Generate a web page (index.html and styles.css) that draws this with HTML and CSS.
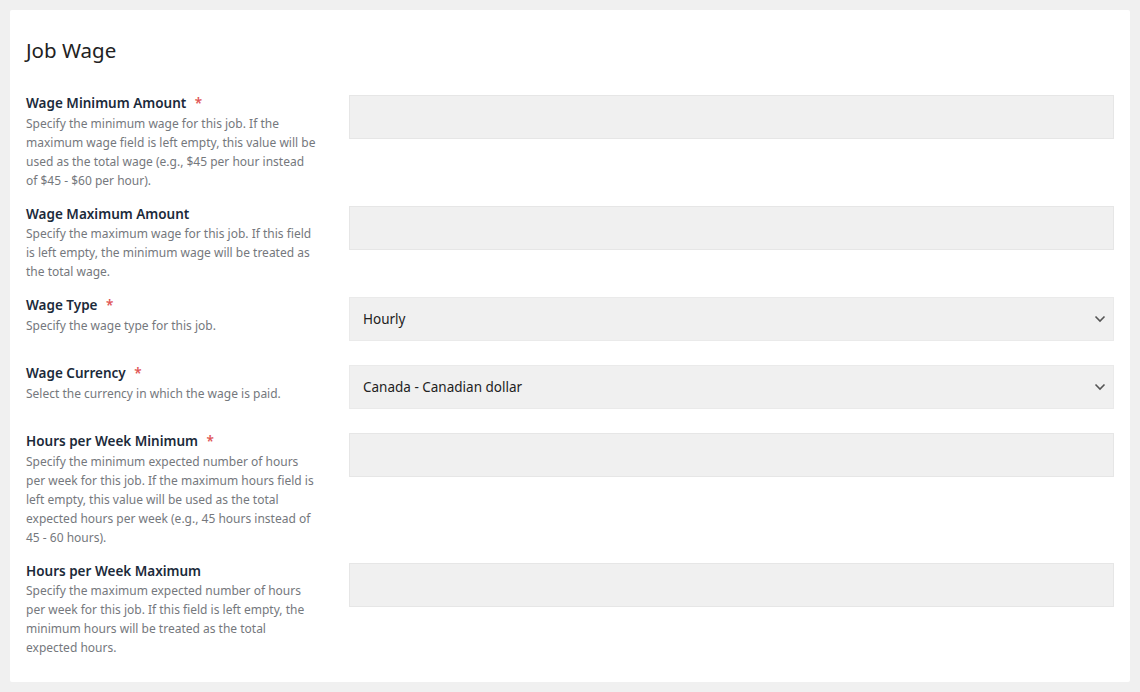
FILE: index.html
```html
<!DOCTYPE html>
<html lang="en">
<head>
  <meta charset="UTF-8" />
  <title>Job Wage</title>
  <link rel="stylesheet" href="styles.css">
</head>
<body>
  <div class="card">
    <h2 class="card-title">Job Wage</h2>

    <div class="field-row">
      <div class="field-info">
        <label class="field-label">Wage Minimum Amount <span class="req">*</span></label>
        <p class="field-desc">Specify the minimum wage for this job. If the maximum wage field is left empty, this value will be used as the total wage (e.g., $45 per hour instead of $45 - $60 per hour).</p>
      </div>
      <div class="field-control">
        <input type="text" class="text-input" />
      </div>
    </div>

    <div class="field-row">
      <div class="field-info">
        <label class="field-label">Wage Maximum Amount</label>
        <p class="field-desc">Specify the maximum wage for this job. If this field is left empty, the minimum wage will be treated as the total wage.</p>
      </div>
      <div class="field-control">
        <input type="text" class="text-input" />
      </div>
    </div>

    <div class="field-row">
      <div class="field-info">
        <label class="field-label">Wage Type <span class="req">*</span></label>
        <p class="field-desc">Specify the wage type for this job.</p>
      </div>
      <div class="field-control">
        <div class="select-box">
          <span>Hourly</span>
          <svg class="chevron" width="12" height="8" viewBox="0 0 12 8"><path d="M1.5 1.5 L6 6 L10.5 1.5" fill="none" stroke="#555" stroke-width="1.6"/></svg>
        </div>
      </div>
    </div>

    <div class="field-row">
      <div class="field-info">
        <label class="field-label">Wage Currency <span class="req">*</span></label>
        <p class="field-desc">Select the currency in which the wage is paid.</p>
      </div>
      <div class="field-control">
        <div class="select-box">
          <span>Canada - Canadian dollar</span>
          <svg class="chevron" width="12" height="8" viewBox="0 0 12 8"><path d="M1.5 1.5 L6 6 L10.5 1.5" fill="none" stroke="#555" stroke-width="1.6"/></svg>
        </div>
      </div>
    </div>

    <div class="field-row">
      <div class="field-info">
        <label class="field-label">Hours per Week Minimum <span class="req">*</span></label>
        <p class="field-desc">Specify the minimum expected number of hours per week for this job. If the maximum hours field is left empty, this value will be used as the total expected hours per week (e.g., 45 hours instead of 45 - 60 hours).</p>
      </div>
      <div class="field-control">
        <input type="text" class="text-input" />
      </div>
    </div>

    <div class="field-row">
      <div class="field-info">
        <label class="field-label">Hours per Week Maximum</label>
        <p class="field-desc">Specify the maximum expected number of hours per week for this job. If this field is left empty, the minimum hours will be treated as the total expected hours.</p>
      </div>
      <div class="field-control">
        <input type="text" class="text-input" />
      </div>
    </div>
  </div>
</body>
</html>
```

FILE: styles.css
```css
body {
  margin: 0;
  padding: 10px;
  background: #f0f0f0;
  font-family: "Noto Sans", "Open Sans", sans-serif;
}

.card {
  background: #fff;
  border-radius: 2px;
  padding: 26px 16px 9px 16px;
}

.card-title {
  margin: 0 0 31px 0;
  font-size: 20.5px;
  font-weight: 400;
  line-height: 28px;
  color: #222;
}

/* one row = description on the left, control on the right */
.field-row {
  display: flex;
  gap: 31px;
  margin-bottom: 16px;
}
.field-info {
  width: 292px;
  flex-shrink: 0;
}
.field-label {
  display: block;
  font-size: 13.5px;
  font-weight: 600;
  line-height: 17px;
  color: #1b2a3a;
}
.req {
  color: #e05555;
  margin-left: 5px;
}
.field-desc {
  margin: 1.5px 0 0 0;
  font-size: 12px;
  line-height: 19px;
  color: #75787d;
}

.field-control {
  flex: 1;
  padding-bottom: 8px;
}
.text-input {
  display: block;
  box-sizing: border-box;
  width: 100%;
  height: 44px;
  margin: 0;
  background: #f0f0f0;
  border: 1px solid #e6e6e6;
  border-radius: 0;
  outline: none;
}
.select-box {
  box-sizing: border-box;
  height: 44px;
  display: flex;
  align-items: center;
  justify-content: space-between;
  padding: 0 7px 0 13px;
  background: #f0f0f0;
  border: 1px solid #eaeaea;
  font-size: 13.5px;
  color: #222;
}
```
